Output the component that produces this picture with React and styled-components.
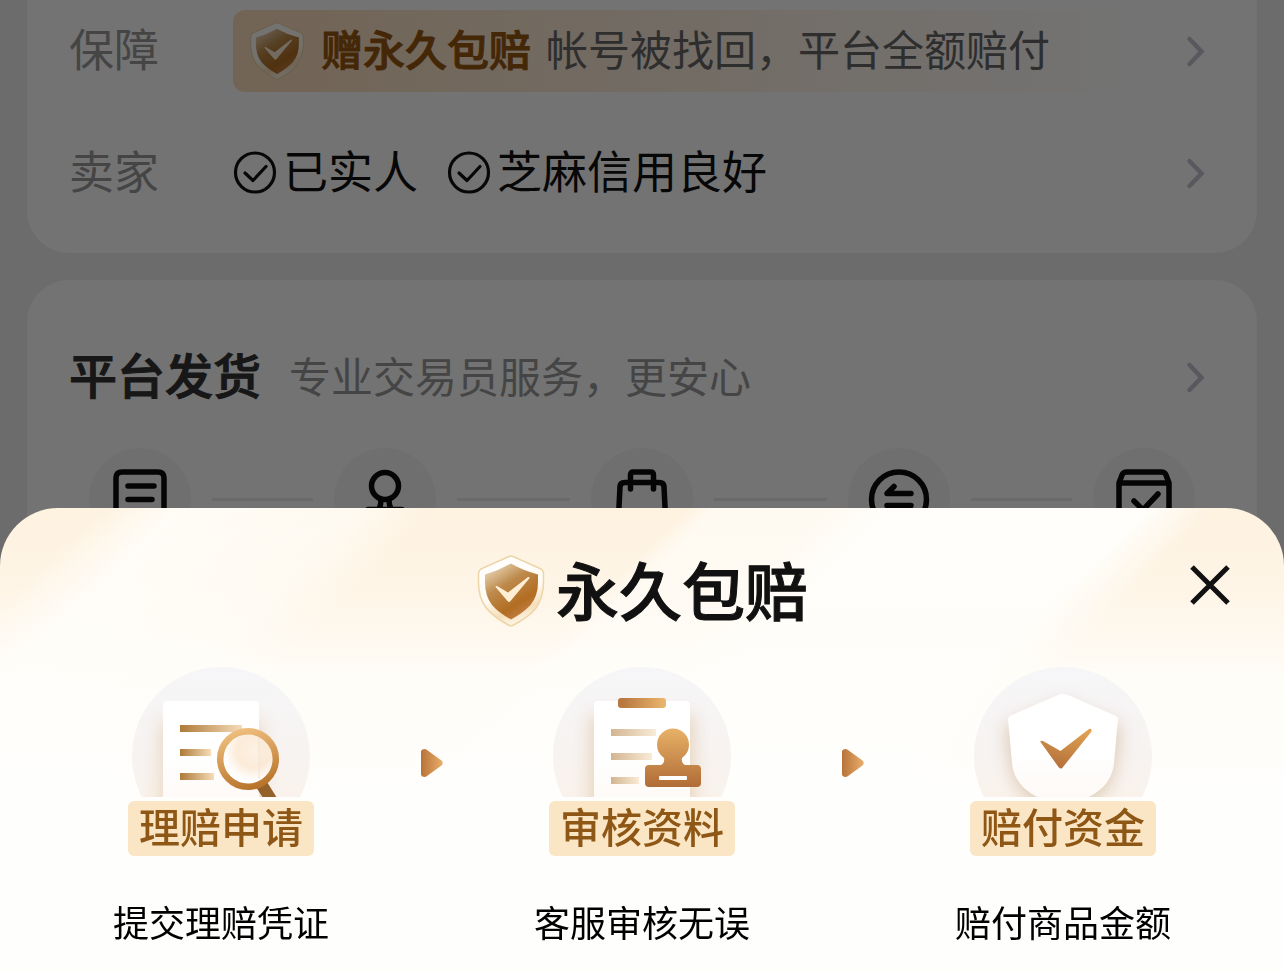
import React from "react";
import styled, { createGlobalStyle, css } from "styled-components";

const GlobalStyle = createGlobalStyle`
  * { box-sizing: border-box; }
  body {
    margin: 0;
    background: #f0f0f0;
    font-family: "Noto Sans CJK SC", "Noto Sans", sans-serif;
  }
  h1, h2, p, ol, dl, dd, dt { margin: 0; padding: 0; }
  button { border: 0; padding: 0; background: none; font: inherit; cursor: pointer; }
`;

const semibold = css`
  font-weight: 500;
  -webkit-text-stroke: 1px currentColor;
`;

const Page = styled.main`
  display: flex;
  flex-direction: column;
  gap: 27px;
  height: 100vh;
  overflow: hidden;
  padding: 0 27px;
`;

const Card = styled.section`
  background: #fff;
  border-radius: ${(p) => (p.$continued ? "0 0 42px 42px" : "42px 42px 0 0")};
  padding: ${(p) => (p.$continued ? "10px 42px 39px" : "56px 42px 0")};
  flex: ${(p) => (p.$continued ? "none" : "1")};
`;

const InfoList = styled.dl`
  display: flex;
  flex-direction: column;
  gap: 40px;
`;

const InfoRow = styled.div`
  display: flex;
  align-items: center;
  height: 82px;
`;

const InfoLabel = styled.dt`
  flex: none;
  width: 164px;
  padding-bottom: 6px;
  font-size: 45px;
  line-height: 76px;
  color: #999;
`;

const InfoValue = styled.dd`
  flex: 1;
  display: flex;
  align-items: center;
  gap: 29px;
`;

const Banner = styled.div`
  flex: 0 1 900px;
  display: flex;
  align-items: center;
  height: 82px;
  padding-left: 15px;
  border-radius: 12px;
  font-size: 42px;
  line-height: 76px;
  white-space: nowrap;
  background: linear-gradient(90deg, #fddebd, rgba(253, 232, 208, 0.75) 45%, rgba(255, 244, 228, 0));
`;

const BannerStrong = styled.strong`
  ${semibold}
  margin: 0 15px;
  padding-bottom: 6px;
  color: #985810;
`;

const BannerText = styled.span`
  padding-bottom: 6px;
  color: #666;
`;

const Verified = styled.span`
  display: flex;
  align-items: center;
  gap: 6px;
  color: #111;
`;

const VerifiedText = styled.span`
  padding-bottom: 6px;
  font-size: 45px;
  line-height: 76px;
`;

const MoreButton = styled.button`
  display: flex;
  align-items: center;
  justify-content: center;
  width: 38px;
  height: 60px;
  margin-left: auto;
`;

const SectionHead = styled.header`
  display: flex;
  align-items: center;
  gap: 28px;
  height: 82px;
`;

const SectionTitle = styled.h2`
  ${semibold}
  padding-bottom: 8px;
  font-size: 48px;
  line-height: 72px;
  color: #333;
`;

const SectionNote = styled.p`
  padding-bottom: 4px;
  font-size: 42px;
  line-height: 76px;
  color: #999;
`;

const Flow = styled.div`
  display: flex;
  align-items: center;
  gap: 21px;
  padding: 30px 20px 0;
`;

const FlowDot = styled.span`
  flex: none;
  width: 102px;
  height: 102px;
  border-radius: 50%;
  background: #f6f6f6;
`;

const FlowLine = styled.span`
  flex: ${(p) => p.$weight} 1 0;
  height: 3px;
  background: #ebebeb;
`;

const Backdrop = styled.div`
  position: fixed;
  inset: 0;
  background: rgba(0, 0, 0, 0.55);
`;

const Sheet = styled.section`
  position: fixed;
  left: 0;
  right: 0;
  bottom: 0;
  padding: 44px 0 27px;
  border-radius: 58px 58px 0 0;
  background:
    linear-gradient(
      180deg,
      rgba(255, 254, 250, 0),
      rgba(255, 253, 249, 0.25) 80px,
      rgba(255, 253, 249, 0.6) 130px,
      rgba(255, 254, 250, 0.88) 165px,
      #fefefd 300px
    ),
    linear-gradient(
      135deg,
      rgba(255, 254, 250, 0) 70px,
      rgba(255, 254, 250, 0.85) 125px,
      rgba(255, 253, 247, 0.7) 255px,
      rgba(255, 254, 250, 0) 310px,
      rgba(255, 254, 250, 0) 486px,
      rgba(255, 253, 248, 0.7) 506px,
      rgba(255, 253, 248, 0.7) 585px,
      rgba(255, 255, 253, 0.95) 635px,
      rgba(255, 255, 253, 0.95) 810px,
      rgba(255, 254, 250, 0) 860px
    ),
    #fef2e0;
`;

const SheetHead = styled.header`
  display: grid;
  grid-template-columns: 1fr auto 1fr;
  align-items: center;
  height: 76px;
  padding: 0 54px;
`;

const SheetTitle = styled.h1`
  grid-column: 2;
  display: flex;
  align-items: center;
  gap: 10px;
`;

const SheetTitleText = styled.span`
  ${semibold}
  padding-bottom: 6px;
  font-size: 63px;
  line-height: 72px;
  color: #111;
`;

const CloseButton = styled.button`
  justify-self: end;
  display: flex;
  width: 40px;
  height: 40px;
  margin-bottom: 12px;
`;

const Steps = styled.ol`
  display: flex;
  justify-content: space-between;
  padding: 39px 113px 0;
  list-style: none;
`;

const Step = styled.li`
  display: flex;
  flex-direction: column;
  align-items: center;
  width: 216px;
`;

const StepArrow = styled.li`
  display: flex;
  align-items: center;
  height: 192px;
`;

const Art = styled.svg`
  display: block;
  width: 186px;
  height: 134px;
`;

const StepTag = styled.p`
  width: 186px;
  padding-bottom: 6px;
  border-radius: 6px;
  background: #fae6c5;
  font-size: 41px;
  line-height: 49px;
  font-weight: 500;
  text-align: center;
  white-space: nowrap;
  color: #8f5716;
`;

const StepCaption = styled.p`
  margin-top: 41px;
  font-size: 36px;
  line-height: 48px;
  white-space: nowrap;
  color: #000;
`;

function Shield({ id, width, height }) {
  return (
    <svg width={width} height={height} viewBox="0 0 70 74" aria-hidden="true">
      <defs>
        <linearGradient id={id} x1="0.1" y1="0" x2="0.7" y2="1">
          <stop offset="0" stopColor="#efe0c4" />
          <stop offset="0.4" stopColor="#bd8a4c" />
          <stop offset="0.75" stopColor="#b26d22" />
          <stop offset="1" stopColor="#c48148" />
        </linearGradient>
        <linearGradient id={id + "rim"} x1="0.3" y1="0" x2="0.6" y2="1">
          <stop offset="0" stopColor="#fff" />
          <stop offset="0.55" stopColor="#fffaf2" />
          <stop offset="0.8" stopColor="#f6dfba" />
          <stop offset="1" stopColor="#fffaf2" />
        </linearGradient>
      </defs>
      <path
        d="M33 2.500Q35 1.500 37 2.500L64 14.500Q67.500 16 67.500 20V28Q67.500 43 60 54Q53 63 37.500 71Q35 72.500 32.500 71Q17 63 9.500 53Q2.500 43 2.500 28V20Q2.500 16 6 14.500Z"
        fill={`url(#${id}rim)`}
        stroke="#edd5a8"
        strokeWidth="1.500"
      />
      <path
        d="M35 9.500Q47 16.500 62 20.500V28Q62 42 54.500 51Q47 59 35 65.500Q23 59 16 51Q9 42 9 28V20.500Q23 16.500 35 9.500Z"
        fill={`url(#${id})`}
      />
      <path d="M19.500 33Q19.500 31.500 21.500 32.300L32 38.500L52 23Q54 22.500 53.300 24.500L34.500 47Q33 48.800 31.500 47Z" fill="#fdeed4" />
    </svg>
  );
}

const CheckCircle = () => (
  <svg width="44" height="44" viewBox="0 0 44 44" fill="none" stroke="#111" strokeWidth="3.200" aria-hidden="true">
    <circle cx="22" cy="21.500" r="19.500" />
    <path d="M12 22L20 29.500L33 15.500" strokeLinecap="round" strokeLinejoin="round" />
  </svg>
);

const More = ({ label }) => (
  <MoreButton type="button" aria-label={label}>
    <svg width="20" height="32" viewBox="0 0 20 32" fill="none" stroke="#c3c6d0" strokeWidth="4.500" strokeLinecap="round">
      <path d="M3.500 4L15.500 16.500L3.500 29" />
    </svg>
  </MoreButton>
);

const FlowIcon = ({ children }) => (
  <FlowDot>
    <svg
      width="102"
      height="102"
      viewBox="0 0 102 102"
      fill="none"
      stroke="#0c0c0c"
      strokeWidth="5.500"
      strokeLinecap="round"
      strokeLinejoin="round"
      aria-hidden="true"
    >
      {children}
    </svg>
  </FlowDot>
);

const ArtDefs = ({ id }) => (
  <defs>
    <linearGradient id={id + "bg"} x1="0" y1="0" x2="0" y2="1">
      <stop offset="0" stopColor="#f6f6f8" />
      <stop offset="0.5" stopColor="#f7f3f1" />
      <stop offset="1" stopColor="#fcf2e6" />
    </linearGradient>
    <linearGradient id={id + "paper"} x1="0" y1="0" x2="0" y2="1">
      <stop offset="0.5" stopColor="#fff" />
      <stop offset="1" stopColor="#fdf8f4" />
    </linearGradient>
    <linearGradient id={id + "line"} x1="0" y1="0" x2="1" y2="0">
      <stop offset="0" stopColor="#ad7a38" />
      <stop offset="1" stopColor="#f6dcb8" />
    </linearGradient>
    <linearGradient id={id + "gold"} x1="0.3" y1="0" x2="0.6" y2="1">
      <stop offset="0" stopColor="#eebd7c" />
      <stop offset="1" stopColor="#b9752c" />
    </linearGradient>
    <linearGradient id={id + "stamp"} gradientUnits="userSpaceOnUse" x1="0" y1="61" x2="0" y2="120">
      <stop offset="0" stopColor="#e8b267" />
      <stop offset="1" stopColor="#b06c37" />
    </linearGradient>
    <radialGradient id={id + "glass"} cx="0.6" cy="0.35" r="0.55">
      <stop offset="0" stopColor="#fdf0e0" />
      <stop offset="0.55" stopColor="#fbe9d4" />
      <stop offset="1" stopColor="#fff" />
    </radialGradient>
    <filter id={id + "soft"} x="-50%" y="-50%" width="200%" height="200%">
      <feGaussianBlur stdDeviation="9" />
    </filter>
    <clipPath id={id + "disc"}>
      <path d="M0 0H186V130H0Z" />
    </clipPath>
    <clipPath id={id + "round"}>
      <circle cx="93" cy="89" r="89" />
    </clipPath>
  </defs>
);

const ClaimArt = () => (
  <Art viewBox="0 0 186 134" aria-hidden="true">
    <ArtDefs id="claim" />
    <g clipPath="url(#claimdisc)">
      <circle cx="93" cy="89" r="89" fill="url(#claimbg)" />
      <g clipPath="url(#claimround)">
        <rect x="33" y="54" width="100" height="110" fill="#dfc3a0" opacity="0.6" filter="url(#claimsoft)" />
      </g>
      <rect x="35" y="34" width="96" height="110" rx="4" fill="url(#claimpaper)" />
      <rect x="52" y="58" width="62" height="7" fill="url(#claimline)" />
      <rect x="52" y="82" width="31" height="7" fill="url(#claimline)" />
      <rect x="52" y="106" width="34" height="7" fill="url(#claimline)" />
      <path d="M128 120L139 115L149 131H135Z" fill="#93622a" />
      <circle cx="120" cy="92" r="27.500" fill="url(#claimglass)" fillOpacity="0.9" />
      <path d="M131 70V112" stroke="#efe5d8" strokeWidth="1" />
      <circle cx="120" cy="92" r="27.800" fill="none" stroke="url(#claimgold)" strokeWidth="6.500" />
    </g>
  </Art>
);

const ReviewArt = () => (
  <Art viewBox="0 0 186 134" aria-hidden="true">
    <ArtDefs id="review" />
    <linearGradient id="reviewclip" x1="0" y1="0" x2="1" y2="0">
      <stop offset="0.1" stopColor="#b87840" />
      <stop offset="1" stopColor="#ebb76e" />
    </linearGradient>
    <g clipPath="url(#reviewdisc)">
      <circle cx="93" cy="89" r="89" fill="url(#reviewbg)" />
      <g clipPath="url(#reviewround)">
        <rect x="42" y="48" width="102" height="120" fill="#dfc3a0" opacity="0.7" filter="url(#reviewsoft)" />
      </g>
      <rect x="45" y="34" width="96" height="110" rx="4" fill="url(#reviewpaper)" />
      <rect x="69" y="31" width="48" height="10" rx="3" fill="url(#reviewclip)" />
      <g opacity="0.55">
        <rect x="62" y="62" width="45" height="7" fill="url(#reviewline)" />
        <rect x="62" y="86" width="41" height="7" fill="url(#reviewline)" />
        <rect x="62" y="110" width="28" height="7" fill="url(#reviewline)" />
      </g>
      <path
        d="M115 91Q108 86 108 77.500A16 16 0 0 1 140 77.500Q140 86 133 91Q132 96 136 98H148Q152 98 152 102V116Q152 120 148 120H100Q96 120 96 116V102Q96 98 100 98H112Q116 96 115 91Z"
        fill="url(#reviewstamp)"
      />
      <rect x="110" y="109" width="28" height="4" rx="1" fill="#fff" />
    </g>
  </Art>
);

const PayoutArt = () => (
  <Art viewBox="0 0 186 134" aria-hidden="true">
    <ArtDefs id="payout" />
    <linearGradient id="payoutcheck" x1="0.8" y1="0" x2="0.4" y2="1">
      <stop offset="0" stopColor="#e0a252" />
      <stop offset="1" stopColor="#b5703a" />
    </linearGradient>
    <g clipPath="url(#payoutdisc)">
      <circle cx="93" cy="89" r="89" fill="url(#payoutbg)" />
      <g clipPath="url(#payoutround)">
        <path d="M93 36L150 60L144 100Q140 130 93 150Q46 130 42 100L36 60Z" fill="#cfb394" opacity="0.7" filter="url(#payoutsoft)" />
      </g>
      <path
        d="M89 27.500Q93 26 97 27.500L146 49Q148 50 148 52L144 96Q142 118 119 130Q104 138 93 142Q82 138 67 130Q44 118 42 96L38 52Q38 50 40 49Z"
        fill="url(#payoutpaper)"
      />
      <path d="M70.500 75Q70 73 73 74L90.500 84L119 62Q122 61 121.500 64.500L93 100Q91 103 88.500 100Z" fill="url(#payoutcheck)" />
    </g>
  </Art>
);

const Arrow = ({ id }) => (
  <StepArrow aria-hidden="true">
    <svg width="22" height="28" viewBox="0 0 22 28">
      <defs>
        <linearGradient id={id} x1="0" y1="0" x2="1" y2="0">
          <stop offset="0" stopColor="#b87338" />
          <stop offset="1" stopColor="#e8ae6c" />
        </linearGradient>
      </defs>
      <path d="M0 2Q1 0 3.500 0Q5 0 6 1L20.500 11.500Q23 14 20.500 16.500L6 27Q5 28 3.500 28Q1 28 0 26Z" fill={`url(#${id})`} />
    </svg>
  </StepArrow>
);

const STEPS = [
  { art: <ClaimArt />, tag: "理赔申请", caption: "提交理赔凭证" },
  { art: <ReviewArt />, tag: "审核资料", caption: "客服审核无误" },
  { art: <PayoutArt />, tag: "赔付资金", caption: "赔付商品金额" },
];

export default function App() {
  return (
    <>
      <GlobalStyle />
      <Page>
        <Card $continued>
          <InfoList>
            <InfoRow>
              <InfoLabel>保障</InfoLabel>
              <InfoValue>
                <Banner>
                  <Shield id="bannerShield" width={58} height={60} />
                  <BannerStrong>赠永久包赔</BannerStrong>
                  <BannerText>帐号被找回，平台全额赔付</BannerText>
                </Banner>
              </InfoValue>
              <More label="保障" />
            </InfoRow>
            <InfoRow>
              <InfoLabel>卖家</InfoLabel>
              <InfoValue>
                <Verified>
                  <CheckCircle />
                  <VerifiedText>已实人</VerifiedText>
                </Verified>
                <Verified>
                  <CheckCircle />
                  <VerifiedText>芝麻信用良好</VerifiedText>
                </Verified>
              </InfoValue>
              <More label="卖家" />
            </InfoRow>
          </InfoList>
        </Card>

        <Card>
          <SectionHead>
            <SectionTitle>平台发货</SectionTitle>
            <SectionNote>专业交易员服务，更安心</SectionNote>
            <More label="平台发货" />
          </SectionHead>
          <Flow>
            <FlowIcon>
              <path d="M27 78V30Q27 24 33 24H69Q75 24 75 30V78ZM39 38H65M39 51.500H63" />
            </FlowIcon>
            <FlowLine $weight={9} />
            <FlowIcon>
              <circle cx="51" cy="38" r="13.500" />
              <path d="M47 52Q47 57 45 61M55 52Q55 57 57 61M34 74V61.500H68V74Z" />
            </FlowIcon>
            <FlowLine $weight={10} />
            <FlowIcon>
              <path d="M27 78L29 39Q29 34.500 34 34.500H68Q73 34.500 73 39L75 78ZM39.500 41V27Q39.500 24 42.500 24H59.500Q62.500 24 62.500 27V41" />
            </FlowIcon>
            <FlowLine $weight={10} />
            <FlowIcon>
              <circle cx="51" cy="51.500" r="27.500" />
              <path d="M63 45.500H39L46 38.500M39 57.500H63L56 64.500" />
            </FlowIcon>
            <FlowLine $weight={9} />
            <FlowIcon>
              <path d="M26 35L29 27Q30 24 34 24H68Q72 24 73 27L76 35V78H26ZM26 35H76M41 53L50 62L65 46" />
            </FlowIcon>
          </Flow>
        </Card>
      </Page>

      <Backdrop />

      <Sheet role="dialog" aria-modal="true" aria-labelledby="sheet-title">
        <SheetHead>
          <SheetTitle id="sheet-title">
            <Shield id="titleShield" width={70} height={74} />
            <SheetTitleText>永久包赔</SheetTitleText>
          </SheetTitle>
          <CloseButton type="button" aria-label="关闭">
            <svg width="40" height="40" viewBox="0 0 40 40" fill="none" stroke="#111" strokeWidth="5">
              <path d="M2 2L38 38M38 2L2 38" />
            </svg>
          </CloseButton>
        </SheetHead>
        <Steps>
          {STEPS.map((step, index) => (
            <React.Fragment key={step.tag}>
              {index > 0 && <Arrow id={`arrow${index}`} />}
              <Step>
                {step.art}
                <StepTag>{step.tag}</StepTag>
                <StepCaption>{step.caption}</StepCaption>
              </Step>
            </React.Fragment>
          ))}
        </Steps>
      </Sheet>
    </>
  );
}
